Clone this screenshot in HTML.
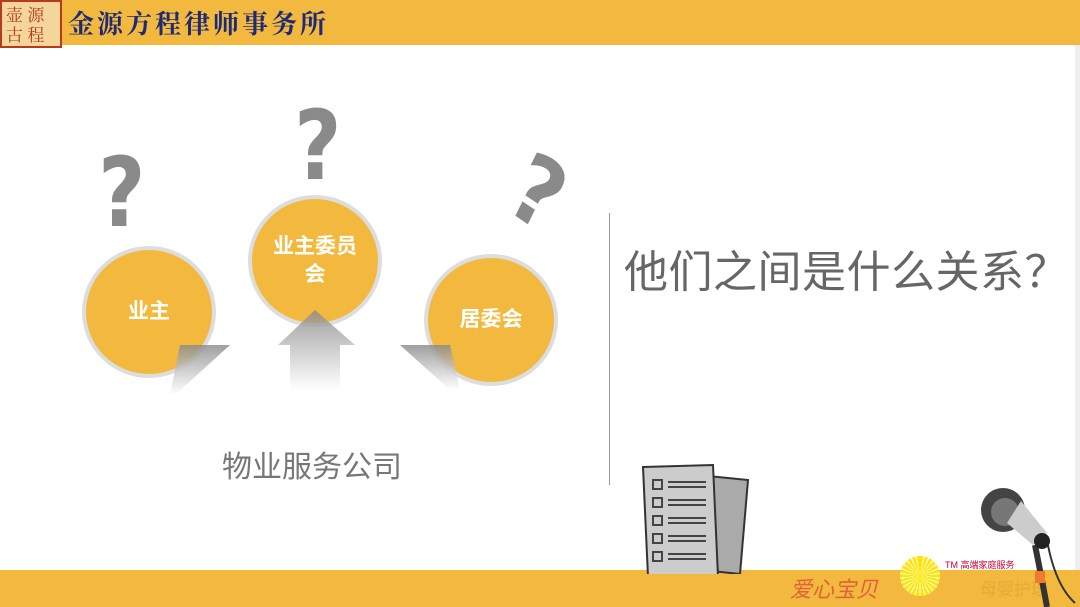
<!DOCTYPE html>
<html><head><meta charset="utf-8"><style>
body{margin:0;width:1080px;height:607px;position:relative;overflow:hidden;background:#fff;font-family:"Liberation Sans","Noto Sans CJK SC",sans-serif}
.a{position:absolute}
.c{position:absolute;border-radius:50%;background:#F2B93E;border:4px solid #ddd;box-sizing:border-box;display:flex;align-items:center;justify-content:center;color:#fff;font-weight:bold;font-size:21px;text-align:center;line-height:28px}
.q{position:absolute;color:#8a8a8a;font-weight:bold;font-size:96px;line-height:1;font-family:"DejaVu Sans",sans-serif;transform:scaleX(.85)}
</style></head><body>
<div class="a" style="left:0;top:0;width:1080px;height:45px;background:#F2B93E"></div>
<div class="a" style="left:0;top:0;width:62px;height:48px;background:#f5d69a;border:2px solid #b83a1e;box-sizing:border-box;color:#b83a1e;font-size:17px;line-height:20px;font-family:'Noto Serif CJK SC',serif;padding:2px 4px">壶 源<br>古 程</div>
<div class="a" style="left:68px;top:6px;color:#1c2a78;font-size:26px;font-weight:bold;letter-spacing:3px;font-family:'Noto Serif CJK SC',serif;line-height:34px">金源方程律师事务所</div>
<div class="a" style="left:1075px;top:45px;width:5px;height:525px;background:#eee"></div>
<div class="q" style="left:94px;top:145px">?</div>
<div class="q" style="left:290px;top:98px">?</div>
<div class="q" style="left:510px;top:145px;transform:scaleX(.85) rotate(30deg)">?</div>
<div class="c" style="left:82px;top:246px;width:134px;height:132px">业主</div>
<div class="c" style="left:248px;top:195px;width:134px;height:132px">业主委员<br>会</div>
<div class="c" style="left:424px;top:254px;width:134px;height:132px">居委会</div>
<svg class="a" style="left:160px;top:300px" width="420" height="110">
<defs><linearGradient id="g" x1="0" y1="0" x2="0" y2="1"><stop offset="0" stop-color="#888"/><stop offset="1" stop-color="#fff"/></linearGradient></defs>
<polygon points="20,45 70,45 15,95 10,95" fill="url(#g)" opacity=".8"/>
<polygon points="118,45 155,10 195,45 180,45 180,90 130,90 130,45" fill="url(#g)" opacity=".8"/>
<polygon points="240,45 290,45 300,90 290,90" fill="url(#g)" opacity=".8"/>
</svg>
<div class="a" style="left:222px;top:442px;font-size:30px;color:#777;white-space:nowrap">物业服务公司</div>
<div class="a" style="left:609px;top:213px;width:1px;height:272px;background:#999"></div>
<div class="a" style="left:624px;top:236px;font-size:44px;color:#666;white-space:nowrap;letter-spacing:0.5px">他们之间是什么关系<span style="font-family:'Noto Sans CJK SC',sans-serif">？</span></div>
<div class="a" style="left:0;top:570px;width:1080px;height:37px;background:#F2B93E"></div>
<svg class="a" style="left:638px;top:462px" width="112" height="112">
<polygon points="50,12 110,18 102,112 45,106" fill="#aaa" stroke="#333" stroke-width="2"/>
<polygon points="5,5 75,3 80,115 10,115" fill="#ccc" stroke="#333" stroke-width="2"/>
<g stroke="#444" stroke-width="2" fill="none">
<rect x="15" y="18" width="9" height="9"/><rect x="15" y="36" width="9" height="9"/><rect x="15" y="54" width="9" height="9"/><rect x="15" y="72" width="9" height="9"/><rect x="15" y="90" width="9" height="9"/>
<path d="M30 20h38M30 25h38M30 38h38M30 43h38M30 56h38M30 61h38M30 74h38M30 79h38M30 92h38M30 97h38"/></g></svg>
<div class="a" style="left:790px;top:572px;color:#e0623a;font-size:22px;font-style:italic">爱心宝贝</div>
<div class="a" style="left:900px;top:556px;width:40px;height:40px;border-radius:50%;background:repeating-conic-gradient(#ffe600 0 10deg,#fff 10deg 14deg)"></div>
<div class="a" style="left:945px;top:558px;font-size:9px;color:#c03">TM 高端家庭服务</div>
<div class="a" style="left:980px;top:575px;font-size:17px;color:#e5a93a">母婴护理</div>
<svg class="a" style="left:975px;top:485px" width="105" height="122">
<path d="M60 60 Q68 100 72 122" stroke="#333" stroke-width="6" fill="none"/>
<path d="M72 55 Q80 100 100 118" stroke="#333" stroke-width="2" fill="none"/>
<rect x="60" y="86" width="10" height="12" fill="#f07a30"/>
<circle cx="28" cy="25" r="22" fill="#444"/><circle cx="30" cy="27" r="14" fill="#777"/>
<polygon points="32,38 46,16 72,48 58,60" fill="#ccc"/><circle cx="67" cy="56" r="8" fill="#222"/>
</svg>
</body></html>
